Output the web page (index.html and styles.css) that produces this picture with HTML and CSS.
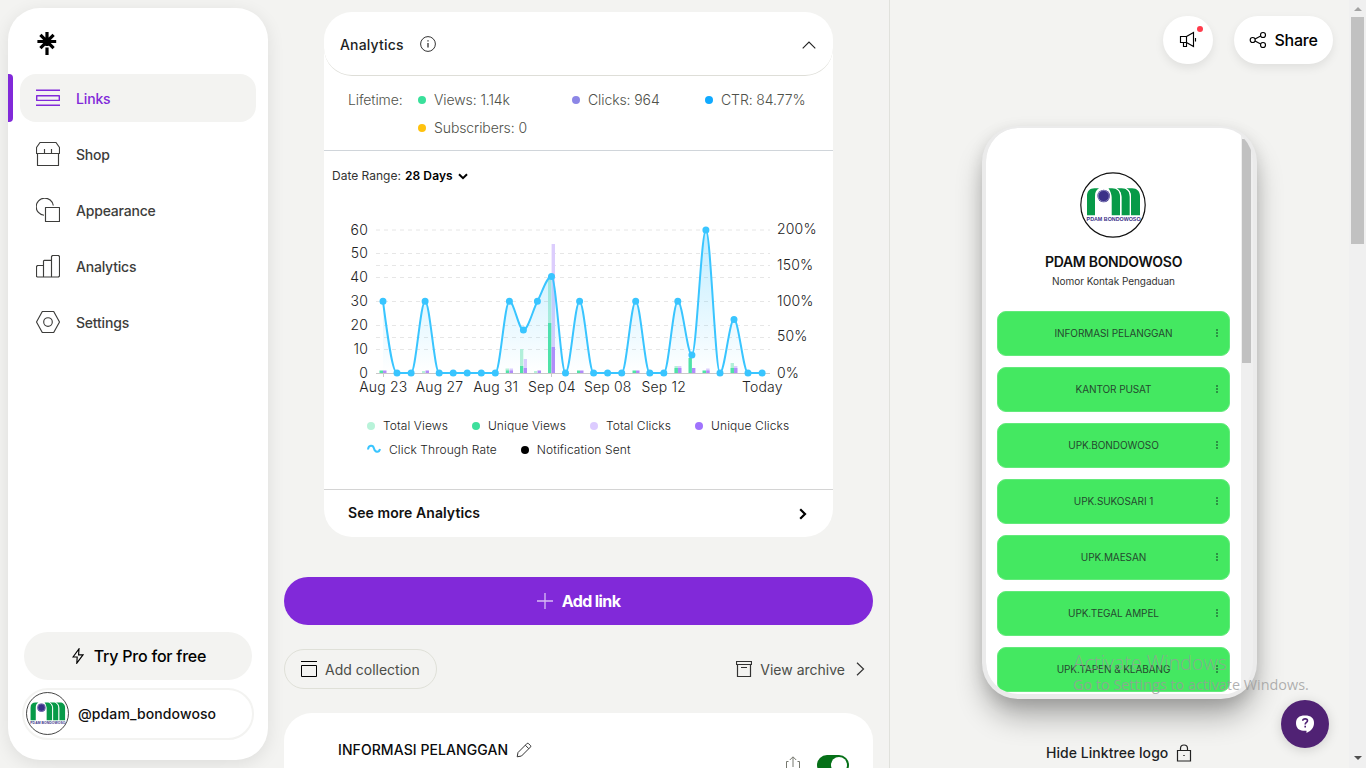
FILE: index.html
```html
<!DOCTYPE html>
<html lang="en">
<head>
<meta charset="utf-8">
<title>Linktree Admin</title>
<link rel="stylesheet" href="styles.css">
</head>
<body>
<svg class="defs" width="0" height="0">
  <symbol id="pdam" viewBox="0 0 66 66">
    <circle cx="33" cy="33" r="32.2" fill="#fff" stroke="#111" stroke-width="1.2"/>
    <g fill="#079a48">
      <path d="M7 43.300V24c0-5 3-7.700 7.500-7.700h4.500c-3 2-4 4-4 8v19z"/>
      <path d="M28.500 16.300h3.500c5 0 8 3 8 8v19h-8.300V28c0-2 .5-6-3.200-11.700z"/>
      <path d="M36 16.300h5.700c5 0 8 3 8 8v19h-8.400V25c0-4-1.600-7.400-5.300-8.700z"/>
      <path d="M46 16.300h6c5 0 8 3 8 8v19h-9V25c0-4-1.300-7.400-5-8.700z"/>
      <path d="M41 43.300V25c0-4-2-7.500-5-8.700M50.500 43.300V25c0-4-2-7.500-5-8.700" fill="none" stroke="#fff" stroke-width="1"/>
    </g>
    <circle cx="23.700" cy="24" r="7.200" fill="#fff"/>
    <circle cx="23.700" cy="24" r="6.300" fill="#3a3088"/>
    <circle cx="23.700" cy="24" r="5.600" fill="#3a3088" stroke="#b9b5db" stroke-width=".6"/>
    <text x="6.600" y="49.300" textLength="54" lengthAdjust="spacingAndGlyphs" class="pdam-text">PDAM BONDOWOSO</text>
  </symbol>
</svg>

<div class="app">
  <aside class="sidebar">
    <div class="brand">
      <svg width="20" height="24" viewBox="0 0 20 24" stroke="#000" stroke-width="3.200"><path d="M10 0v14M.4 9.500h18.800M3.400 2.900l13.200 13.200M16.600 2.900L3.400 16.100M10 15.600V23"/></svg>
    </div>
    <nav class="nav">
      <a class="nav-item active"><svg width="24" height="24" viewBox="0 0 24 24"><path d="M0 4.300h24M0 19.300h24M.7 9.700h22.600v4.700H.7z"/></svg>Links</a>
      <a class="nav-item"><svg width="24" height="24" viewBox="0 0 24 24"><path d="M4 .5h16l3.500 5v6H.5v-6zM1.500 11.500v12h21v-12M8.500 7v4.500M15.500 7v4.500"/></svg>Shop</a>
      <a class="nav-item"><svg width="24" height="24" viewBox="0 0 24 24"><path d="M9.500 9.500h14v14h-14zM8 17.300A8.600 8.600 0 1 1 17.300 7.500"/></svg>Appearance</a>
      <a class="nav-item"><svg width="24" height="24" viewBox="0 0 24 24"><path d="M.5 22.500v-10l1-1h6v11.500H1.500zM7.500 11.500V7l.7-.7h7.300V23h-8zM15.500 6.500V2.500l1-1h6l1 1v19.500l-1 1h-7"/></svg>Analytics</a>
      <a class="nav-item"><svg width="24" height="24" viewBox="0 0 24 24"><path d="M6.300 1.500h11.400l5.800 10.500-5.800 10.500H6.300L.5 12z"/><circle cx="12" cy="12" r="4.300"/></svg>Settings</a>
    </nav>
    <button class="try-pro"><svg width="12" height="16" viewBox="0 0 12 16"><path d="M7 .8L1 9h4.200L4.800 15.200 11 6.800H6.600z"/></svg>Try Pro for free</button>
    <div class="account"><svg class="avatar-sm" width="43" height="43"><use href="#pdam"/></svg><span>@pdam_bondowoso</span></div>
  </aside>

  <main class="main">
    <section class="analytics">
      <header class="analytics-head">
        <span>Analytics</span>
        <svg class="info" width="16" height="16" viewBox="0 0 16 16"><circle cx="8" cy="8" r="7.400"/><path d="M8 7v4.600M8 4.200v1.300" stroke-width="1.300"/></svg>
        <svg class="chev-up" width="14" height="8" viewBox="0 0 14 8"><path d="M.7 7.400L7 1l6.300 6.400"/></svg>
      </header>
      <div class="lifetime">
        <span class="lt-label">Lifetime:</span>
        <span class="lt"><i class="dot green"></i>Views: 1.14k</span>
        <span class="lt"><i class="dot indigo"></i>Clicks: 964</span>
        <span class="lt"><i class="dot blue"></i>CTR: 84.77%</span>
        <span class="lt subs"><i class="dot amber"></i>Subscribers: 0</span>
      </div>
      <div class="range"><span>Date Range:</span><b>28 Days</b><svg width="10" height="7" viewBox="0 0 10 7"><path d="M1 1.200l4 4 4-4"/></svg></div>
      <svg class="chart" width="509" height="200" viewBox="324 210 509 200">
        <defs><linearGradient id="area" gradientUnits="userSpaceOnUse" x1="0" y1="230" x2="0" y2="373"><stop offset="0" stop-color="#39c5ff" stop-opacity=".32"/><stop offset="1" stop-color="#39c5ff" stop-opacity="0"/></linearGradient></defs>
        <path class="grid" d="M376 230h394M376 253.500h394M376 265.500h394M376 277.500h394M376 301.500h394M376 325.500h394M376 337.500h394M376 349.500h394"/>
        <path class="axis" d="M376 373.500h394M383.500 373v4M551.500 373v4"/>
        <g fill="#b6f1d8"><path d="M422 373v-2h3v2zM505.500 373v-4.500h3.500v4.500zM520 373v-24h3.300v24zM534 373v-2h3v2zM548 373v-95h3.400v95zM674.500 373v-7h3.400v7zM730.600 373v-10h3.400v10z"/></g>
        <g fill="#4fe3a6"><path d="M379.500 373v-2.500h3.500v2.500zM506 373v-2.500h3v2.500zM520 373v-7h3.300v7zM548 373v-50h3.400v50zM577 373v-2.500h3v2.500zM632.500 373v-2.500h3.500v2.500zM674.500 373v-5h3.400v5zM688.500 373v-15h3.400v15zM702.500 373v-2.500h3.500v2.500zM730.600 373v-5h3.400v5z"/></g>
        <g fill="#dccdfd"><path d="M509.500 373v-4.500h3.500v4.500zM523.700 373v-14h3.300v14zM551.600 373V244h3.400v129zM678 373v-7h3.400v7zM706.200 373v-4.500h3.400v4.500zM734 373v-7h3.400v7z"/></g>
        <g fill="#b28cfa"><path d="M383 373v-2.500h3.500v2.500zM425.500 373v-2.500h3.500v2.500zM509.500 373v-2.500h3.500v2.500zM523.700 373v-5h3.300v5zM537.500 373v-2.500h3.500v2.500zM551.600 373v-26h3.400v26zM580 373v-2.500h3.500v2.500zM636 373v-2.500h3.500v2.500zM678 373v-5h3.400v5zM692 373v-5h3.400v5zM706.200 373v-2.500h3.400v2.500zM734 373v-5h3.400v5z"/></g>
        <path fill="url(#area)" d="M383 301.300c4.680 35.900 9.360 71.700 14.040 71.700h14.040c4.680 0 9.360-71.700 14.040-71.700s9.360 71.700 14.040 71.700h56.160c4.680 0 9.360-71.700 14.040-71.700s9.360 28.700 14.040 28.700 9.360-19.800 14.040-28.700 9.360-24.800 14.040-24.800 9.360 96.500 14.040 96.500 9.360-71.700 14.040-71.700 9.360 71.700 14.040 71.700h28.080c4.680 0 9.360-71.700 14.040-71.700s9.360 71.700 14.040 71.700h14.040c4.680 0 9.360-71.700 14.040-71.700s9.360 53.700 14.040 53.700 9.360-125 14.040-125 9.360 143 14.040 143 9.360-53.500 14.040-53.500 9.360 53.500 14.040 53.500h14.040H383z"/>
        <path stroke="#39c5ff" stroke-width="2" d="M383 301.300c4.680 35.900 9.360 71.700 14.040 71.700h14.040c4.680 0 9.360-71.700 14.040-71.700s9.360 71.700 14.040 71.700h56.160c4.680 0 9.360-71.700 14.040-71.700s9.360 28.700 14.040 28.700 9.360-19.800 14.040-28.700 9.360-24.800 14.040-24.800 9.360 96.500 14.040 96.500 9.360-71.700 14.040-71.700 9.360 71.700 14.040 71.700h28.080c4.680 0 9.360-71.700 14.040-71.700s9.360 71.700 14.040 71.700h14.040c4.680 0 9.360-71.700 14.040-71.700s9.360 53.700 14.040 53.700 9.360-125 14.040-125 9.360 143 14.040 143 9.360-53.500 14.040-53.500 9.360 53.500 14.040 53.500h14.040"/>
        <path class="points" d="M383 301.300h0M397 373h0M411.100 373h0M425.100 301.300h0M439.200 373h0M453.200 373h0M467.200 373h0M481.300 373h0M495.300 373h0M509.400 301.300h0M523.400 330h0M537.400 301.300h0M551.500 276.500h0M565.500 373h0M579.600 301.300h0M593.600 373h0M607.600 373h0M621.700 373h0M635.700 301.300h0M649.800 373h0M663.800 373h0M677.800 301.300h0M691.900 355h0M705.900 230h0M720 373h0M734 319.500h0M748 373h0M762.100 373h0"/>
        <g class="ticks end"><text x="368" y="234.500">60</text><text x="368" y="258.300">50</text><text x="368" y="282.100">40</text><text x="368" y="306">30</text><text x="368" y="329.800">20</text><text x="368" y="353.600">10</text><text x="368" y="377.600">0</text></g>
        <g class="ticks"><text x="777" y="234.400">200%</text><text x="777" y="270.200">150%</text><text x="777" y="306">100%</text><text x="777" y="341.400">50%</text><text x="777" y="377.600">0%</text></g>
        <g class="ticks mid"><text x="383.300" y="392">Aug 23</text><text x="439.500" y="392">Aug 27</text><text x="495.700" y="392">Aug 31</text><text x="551.800" y="392">Sep 04</text><text x="607.800" y="392">Sep 08</text><text x="663.800" y="392">Sep 12</text><text x="762.300" y="392">Today</text></g>
      </svg>
      <div class="legend">
        <span><i class="dot" style="background:#b8f3d9"></i>Total Views</span>
        <span><i class="dot" style="background:#3ddf9c"></i>Unique Views</span>
        <span><i class="dot" style="background:#dccbff"></i>Total Clicks</span>
        <span><i class="dot" style="background:#a073fd"></i>Unique Clicks</span>
        <span><svg width="14" height="10" viewBox="0 0 14 10"><path d="M1 5.500C1.500 1 6 .5 7 4.500s5 4.500 6 .5"/></svg>Click Through Rate</span>
        <span><i class="dot" style="background:#000"></i>Notification Sent</span>
      </div>
      <a class="see-more">See more Analytics<svg width="8" height="12" viewBox="0 0 8 12"><path d="M1.200 1.200L6 6l-4.800 4.800"/></svg></a>
    </section>

    <button class="add-link"><svg width="16" height="16" viewBox="0 0 16 16"><path d="M8 0v16M0 8h16"/></svg>Add link</button>

    <div class="tools">
      <button class="collection"><svg width="16" height="16" viewBox="0 0 16 16"><path d="M0 .5h16M.5 4.500h15v11H.5z"/></svg><span>Add collection</span></button>
      <a class="archive"><svg width="16" height="16" viewBox="0 0 16 16"><path d="M.5.5h15v3H.5zM1.500 3.500v12h13v-12M5 6.500h6"/></svg><span>View archive</span><svg width="9" height="14" viewBox="0 0 9 14"><path d="M1 .8L7.500 7 1 13.200"/></svg></a>
    </div>

    <article class="link-card">
      <div class="link-title">INFORMASI PELANGGAN<svg width="16" height="16" viewBox="0 0 16 16"><path d="M1.200 14.800l.8-4.300L11.200 1.300h1l2.500 2.500v1L5.500 14zM9.300 3.200l3.500 3.500"/></svg></div>
      <div class="link-actions"><svg width="16" height="16" viewBox="0 0 16 16"><path d="M3.500 5.500h-2v10h13v-10h-2M8 11V1M4.800 4L8 .8 11.200 4"/></svg><span class="toggle"><i></i></span></div>
    </article>
  </main>

  <section class="preview">
    <div class="top-actions">
      <button class="round"><svg width="18" height="18" viewBox="0 0 18 18"><path d="M1.500 5.500h6v6h-6zM7.500 5.500l7-4v14l-7-4M4.500 11.500v4h3v-3.500M16.500 7v3.500"/></svg><i class="alert"></i></button>
      <button class="share"><svg width="18" height="18" viewBox="0 0 18 18"><circle cx="3.700" cy="9" r="2.500"/><circle cx="14" cy="4" r="2.500"/><circle cx="14" cy="14" r="2.500"/><path d="M6 7.900l5.700-2.800M6 10.100l5.700 2.800"/></svg>Share</button>
    </div>
    <div class="phone">
      <div class="screen">
        <svg class="avatar" width="66" height="66"><use href="#pdam"/></svg>
        <h1>PDAM BONDOWOSO</h1>
        <p>Nomor Kontak Pengaduan</p>
        <div class="btn">INFORMASI PELANGGAN<i></i></div>
        <div class="btn">KANTOR PUSAT<i></i></div>
        <div class="btn">UPK.BONDOWOSO<i></i></div>
        <div class="btn">UPK.SUKOSARI 1<i></i></div>
        <div class="btn">UPK.MAESAN<i></i></div>
        <div class="btn">UPK.TEGAL AMPEL<i></i></div>
        <div class="btn">UPK.TAPEN &amp; KLABANG<i></i></div>
      </div>
      <div class="phone-track"><div class="phone-thumb"></div></div>
    </div>
    <div class="hide-logo">Hide Linktree logo<svg width="16" height="18" viewBox="0 0 16 18"><path d="M1.500 6.500h13v10.500h-13zM4.500 6.500V4.500a3.500 3.500 0 0 1 7 0v2M7.300 11.500h1.400"/></svg></div>
  </section>

  <div class="scrollbar">
    <svg width="8" height="4" viewBox="0 0 8 4"><path d="M0 4l4-4 4 4z" fill="#a3a3a3"/></svg>
    <div class="thumb"></div>
    <svg class="down" width="8" height="4" viewBox="0 0 8 4"><path d="M0 0l4 4 4-4z" fill="#505050"/></svg>
  </div>
</div>

<div class="watermark"><div class="wm-title">Activate Windows</div><div class="wm-text">Go to Settings to activate Windows.</div></div>
<button class="help"><svg width="18" height="18" viewBox="0 0 18 18"><path d="M9 .5c-6 0-9 2.600-9 7.600 0 5 3 7.500 7 7.700h3.500V18c4.500-2 7.500-5 7.500-9.900C18 3.100 15 .5 9 .5z" fill="#fff"/><path d="M6.700 5.800c.2-2.600 4.800-2.600 4.800 0 0 1.700-2.300 1.700-2.300 3.600M9.200 10.800v1.600" fill="none" stroke="#502274" stroke-width="1.600"/></svg></button>
</body>
</html>
```
FILE: styles.css
```css
* { box-sizing: border-box; }
body {
  margin: 0;
  width: 1366px;
  height: 768px;
  overflow: hidden;
  background: #f3f3f1;
  font-family: Inter, "Liberation Sans", sans-serif;
  color: #1e1f24;
}
button { border: 0; padding: 0; font: inherit; color: inherit; }
svg { flex: none; fill: none; }
.defs { position: absolute; }
.pdam-text { font: bold 5.4px "Liberation Sans", sans-serif; fill: #3a3088; }

.app { display: flex; height: 768px; overflow: hidden; }

.sidebar {
  width: 260px;
  height: 752px;
  margin: 8px 0 0 8px;
  flex: none;
  display: flex;
  flex-direction: column;
  background: #fff;
  border-radius: 32px;
  box-shadow: 0 4px 18px rgba(0, 0, 0, .09);
}
.brand { height: 66px; padding: 24px 0 0 29px; }
.nav { display: flex; flex-direction: column; gap: 8px; padding: 0 12px; }
.nav-item {
  position: relative;
  height: 48px;
  display: flex;
  align-items: center;
  gap: 16px;
  padding: 0 16px;
  border-radius: 16px;
  font-size: 14px;
  font-weight: 500;
  color: #3d3d3b;
  letter-spacing: -.2px;
}
.nav-item svg { stroke: #3d3d3b; stroke-width: 1.15; stroke-linejoin: round; }
.nav-item.active { background: #f3f3f1; color: #8129d9; letter-spacing: -.15px; }
.nav-item.active svg { stroke: #8129d9; stroke-width: 1.4; }
.nav-item.active::before {
  content: "";
  position: absolute;
  left: -12px;
  top: 0;
  width: 5px;
  height: 48px;
  background: #8129d9;
  border-radius: 0 4px 4px 0;
}
.try-pro {
  margin: auto 16px 8px;
  height: 48px;
  display: flex;
  align-items: center;
  justify-content: center;
  gap: 10px;
  padding-left: 2px;
  border-radius: 24px;
  background: #f3f3f1;
  font-size: 16px;
  font-weight: 500;
  color: #000;
  letter-spacing: -.23px;
}
.try-pro svg { stroke: #000; stroke-width: 1.15; }
.account {
  height: 52px;
  margin: 0 14px 20px;
  display: flex;
  align-items: center;
  gap: 9px;
  padding-left: 2px;
  border: 2px solid #f3f3f1;
  border-radius: 26px;
  font-size: 14px;
  font-weight: 500;
  color: #111;
  letter-spacing: .1px;
}
.account span { padding-bottom: 2px; }
.avatar-sm { margin-top: -2px; }

.main {
  width: 621px;
  flex: none;
  padding: 12px 16px 0;
  display: flex;
  flex-direction: column;
}
.analytics {
  width: 509px;
  height: 525px;
  margin: 0 auto;
  flex: none;
  background: #fff;
  border-radius: 28px;
}
.analytics-head {
  height: 64px;
  display: flex;
  align-items: center;
  padding: 2px 17px 0 16px;
  border-bottom: 1px solid #deded8;
  border-radius: 28px;
  font-size: 14px;
  font-weight: 500;
  letter-spacing: .17px;
}
.info { margin: -2px 0 0 16px; stroke: #333; }
.chev-up { margin-left: auto; stroke: #222; stroke-width: 1.1; }
.lifetime {
  height: 75px;
  padding: 9px 0 0 24px;
  display: grid;
  grid-template-columns: 70px 154px 133px 1fr;
  grid-template-rows: 28px 28px;
  align-items: center;
  font-size: 14px;
  font-weight: 300;
  letter-spacing: -.1px;
  color: #4f514a;
  border-bottom: 1px solid #d0d5da;
}
.lt { display: flex; align-items: center; gap: 8px; }
.lt .dot { margin-top: 1px; }
.subs { grid-column: 2; }
.dot { width: 8px; height: 8px; border-radius: 50%; flex: none; }
.green { background: #39e09b; }
.indigo { background: #8c86e6; }
.blue { background: #10aaff; }
.amber { background: #ffc20e; }
.range {
  height: 59px;
  padding: 0 8px 11px;
  display: flex;
  align-items: center;
  font-size: 12px;
  color: #333;
}
.range b { margin: 0 5px 0 4px; font-weight: 600; color: #000; letter-spacing: .1px; }
.range svg { stroke: #000; stroke-width: 2; margin-top: 2px; }
.chart { display: block; overflow: visible; }
.grid { stroke: #e6e6e6; stroke-dasharray: 4 4; }
.axis { stroke: #c9c9c9; }
.points { stroke: #39c5ff; stroke-width: 7; stroke-linecap: round; }
.ticks text { font-size: 14px; font-weight: 300; letter-spacing: .17px; fill: #222; }
.end { text-anchor: end; }
.mid { text-anchor: middle; }
.legend {
  height: 79px;
  padding: 3px 30px 0 43px;
  display: flex;
  flex-wrap: wrap;
  align-content: flex-start;
  column-gap: 24px;
  font-size: 12px;
  font-weight: 300;
  letter-spacing: .1px;
  color: #222;
}
.legend span { height: 24px; display: flex; align-items: center; gap: 8px; }
.legend .dot { margin-top: 1px; }
.legend svg { stroke: #39c5ff; stroke-width: 2; }
.see-more {
  height: 48px;
  padding: 0 26px 2px 24px;
  display: flex;
  align-items: center;
  justify-content: space-between;
  border-top: 1px solid #d4d4d4;
  font-size: 14px;
  font-weight: 600;
  color: #111;
  letter-spacing: .07px;
}
.see-more svg { stroke: #000; stroke-width: 2.2; margin-top: 2px; }

.add-link {
  height: 48px;
  margin-top: 40px;
  flex: none;
  display: flex;
  align-items: center;
  justify-content: center;
  gap: 9px;
  border-radius: 24px;
  background: #8129d9;
  color: #fff;
  font-size: 16px;
  font-weight: 700;
  letter-spacing: -.6px;
}
.add-link svg { stroke: #d9bdf5; stroke-width: 1.3; }
.tools {
  margin-top: 24px;
  display: flex;
  align-items: center;
  justify-content: space-between;
  font-size: 14px;
  color: #4b4d48;
}
.collection {
  width: 153px;
  height: 40px;
  display: flex;
  align-items: center;
  gap: 8px;
  padding-left: 16px;
  border: 1px solid #dfe0d8;
  border-radius: 20px;
  background: none;
}
.collection svg { stroke: #000; }
.collection span { padding-top: 1px; }
.archive { display: flex; align-items: center; gap: 8px; padding-right: 8px; }
.archive span { margin-right: 3px; padding-top: 1px; }
.archive svg { stroke: #333; stroke-width: 1.2; }
.link-card {
  height: 160px;
  margin-top: 24px;
  flex: none;
  display: flex;
  justify-content: space-between;
  padding: 27px 24px 0 54px;
  border-radius: 28px;
  background: #fff;
}
.link-title {
  height: 18px;
  display: flex;
  align-items: center;
  gap: 8px;
  font-size: 14px;
  font-weight: 500;
  color: #0a0b0d;
  letter-spacing: .08px;
}
.link-title svg { stroke: #333; margin-top: 2px; }
.link-actions { display: flex; align-items: flex-start; gap: 16px; padding-top: 15px; }
.link-actions svg { stroke: #777970; margin-top: 1px; }
.toggle { width: 32px; height: 20px; border-radius: 10px; background: #067018; display: flex; justify-content: flex-end; padding: 2px; }
.toggle i { width: 16px; height: 16px; border-radius: 50%; background: #fff; }

.preview {
  width: 460px;
  flex: none;
  border-left: 1px solid #e0e1dc;
  padding-top: 16px;
  display: flex;
  flex-direction: column;
}
.top-actions { display: flex; justify-content: flex-end; gap: 21px; padding-right: 16px; }
.round, .share {
  height: 48px;
  border-radius: 25px;
  background: #fff;
  box-shadow: 0 4px 10px rgba(0, 0, 0, .08);
  display: flex;
  align-items: center;
  justify-content: center;
}
.round { position: relative; width: 50px; }
.round svg, .share svg { stroke: #000; stroke-width: 1.15; }
.share { width: 99px; gap: 7px; font-size: 16px; font-weight: 500; color: #000; letter-spacing: -.25px; }
.alert { position: absolute; right: 10px; top: 10px; width: 6px; height: 6px; border-radius: 50%; background: #ff3b4b; }
.phone {
  width: 275px;
  height: 573px;
  margin: 62px 0 0 92px;
  flex: none;
  display: flex;
  overflow: hidden;
  background: #ebebeb;
  border: 4px solid #ebebeb;
  border-top-width: 2px;
  border-radius: 36px;
  box-shadow: 0 20px 30px -4px rgba(0, 0, 0, .33), 0 4px 16px rgba(0, 0, 0, .1);
}
.screen {
  width: 255px;
  height: 566px;
  overflow: hidden;
  padding: 44px 11px 0;
  display: flex;
  flex-direction: column;
  align-items: center;
  background: #fff;
  border-radius: 32px 0 0 32px;
}
.avatar { margin-left: -1px; }
.screen h1 { margin: 15px 0 0; font-size: 14px; line-height: 18px; font-weight: 600; color: #111; white-space: nowrap; letter-spacing: -.28px; }
.screen p { margin: 2px 0 20.6px; font-size: 10px; line-height: 17px; color: #333; letter-spacing: -.04px; }
.btn {
  position: relative;
  width: 233px;
  height: 45px;
  margin-bottom: 11px;
  padding-bottom: 1px;
  flex: none;
  display: flex;
  align-items: center;
  justify-content: center;
  background: #44e861;
  border: 1px solid #63ea7b;
  border-radius: 9px;
  font-size: 10px;
  color: #24492f;
  letter-spacing: -.09px;
}
.btn i { position: absolute; right: 11px; top: 17px; width: 2px; height: 8px; opacity: .75; background: repeating-linear-gradient(#24743a 0 2px, transparent 2px 3px); }
.phone-track { flex: 1; background: #efefef; border-radius: 0 32px 32px 0; overflow: hidden; padding: 11px 2px 0 1px; }
.phone-thumb { width: 9px; height: 224px; background: #c1c1c1; border-radius: 0 5px 0 0 / 0 9px 0 0; }
.hide-logo {
  margin: 44px 0 0 156px;
  display: flex;
  align-items: center;
  gap: 8px;
  font-size: 14px;
  font-weight: 500;
  line-height: 20px;
  letter-spacing: .05px;
}
.hide-logo svg { stroke: #222; stroke-width: 1.2; }

.scrollbar {
  width: 17px;
  flex: none;
  display: flex;
  flex-direction: column;
  align-items: center;
  padding: 7px 0 8px;
  background: #f0f0f0;
}
.thumb { width: 13px; height: 227px; margin-top: 6px; background: #c1c1c1; }
.down { margin-top: auto; }

.watermark {
  position: absolute;
  left: 1073px;
  top: 650px;
  font-family: "Open Sans", sans-serif;
  color: rgba(155, 155, 155, .78);
  white-space: nowrap;
}
.wm-title { font-size: 19.6px; line-height: 26px; font-weight: 300; }
.wm-text { font-size: 14.4px; line-height: 18px; }
.help {
  position: absolute;
  left: 1281px;
  top: 700px;
  width: 48px;
  height: 48px;
  border-radius: 50%;
  background: #502274;
  box-shadow: 0 2px 12px rgba(0, 0, 0, .15);
  display: flex;
  align-items: center;
  justify-content: center;
}
```
